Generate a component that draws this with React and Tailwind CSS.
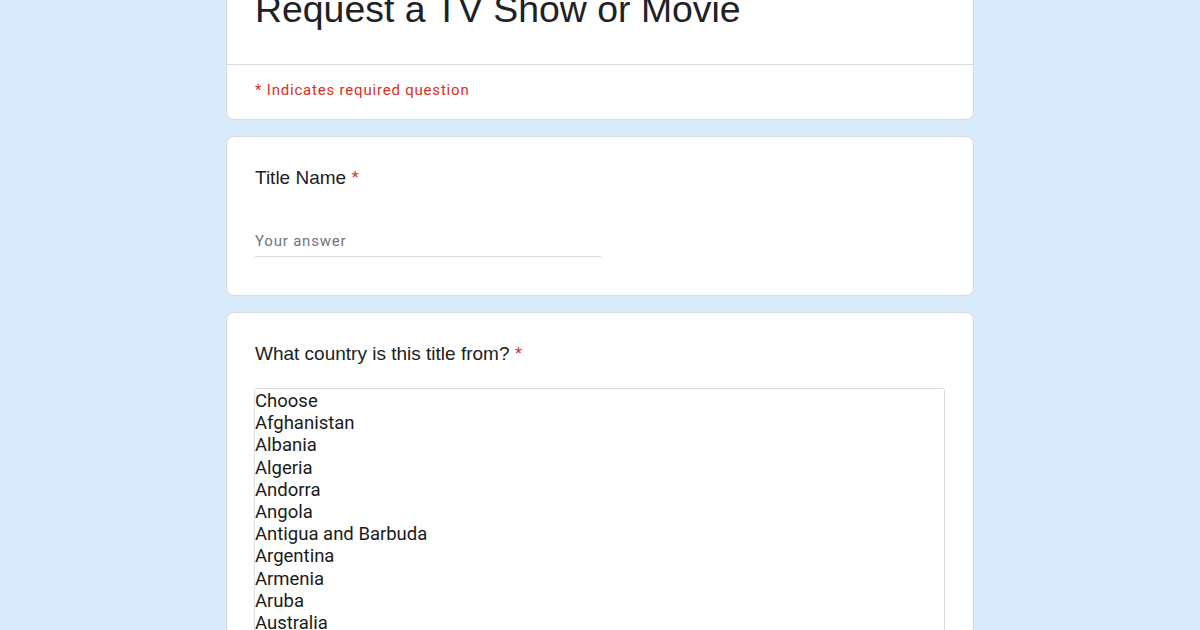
const countries = [
  'Choose',
  'Afghanistan',
  'Albania',
  'Algeria',
  'Andorra',
  'Angola',
  'Antigua and Barbuda',
  'Argentina',
  'Armenia',
  'Aruba',
  'Australia',
  'Austria',
  'Azerbaijan',
]

export default function App() {
  return (
    <div className="w-[1200px] h-[630px] overflow-hidden bg-[#d9ebfb] font-['Roboto',sans-serif] text-[#202124]">
      <div className="w-[748px] mx-auto -mt-[40px] flex flex-col gap-[16px]">
        {/* Header card */}
        <div className="bg-white border border-[#dadce0] rounded-[8px]">
          <div className="h-[104px] flex items-end px-[28px] pb-[33px] border-b border-[#dadce0]">
            <h1 className="font-['Liberation_Sans',Arial,sans-serif] text-[37.4px] leading-[44px] whitespace-nowrap">
              Request a TV Show or Movie
            </h1>
          </div>
          <div className="px-[28px] pt-[15px] pb-[19px] text-[15px] leading-[20px] text-[#d93025] tracking-[0.8px]">
            * Indicates required question
          </div>
        </div>

        {/* Title name */}
        <div className="bg-white border border-[#dadce0] rounded-[8px] px-[28px] pt-[29px] pb-[38px]">
          <div className="font-['Liberation_Sans',Arial,sans-serif] text-[19px] leading-[24px]">
            Title Name <span className="text-[#d93025]">*</span>
          </div>
          <div className="mt-[41px] w-[346px] border-b border-[#dadce0] pb-[5px] text-[15px] leading-[20px] text-[#70757a] tracking-[0.8px]">
            Your answer
          </div>
        </div>

        {/* Country */}
        <div className="bg-white border border-[#dadce0] rounded-[8px] px-[28px] pt-[29px] h-[400px]">
          <div className="font-['Liberation_Sans',Arial,sans-serif] text-[19px] leading-[24px]">
            What country is this title from? <span className="text-[#d93025]">*</span>
          </div>
          <div className="mt-[22px] -ml-px border border-[#dadce0] rounded-[3px] pt-[1px] text-[#1a1a1a]">
            {countries.map((c) => (
              <div key={c} className="text-[18.5px] leading-[22.2px]">
                {c}
              </div>
            ))}
          </div>
        </div>
      </div>
    </div>
  )
}
